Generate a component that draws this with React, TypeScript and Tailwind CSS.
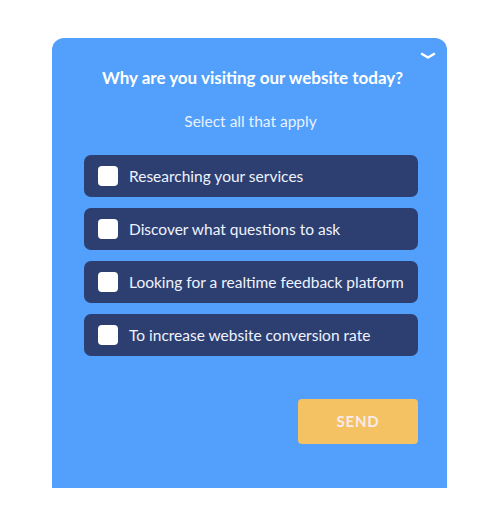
import { useState } from "react";

const options = [
  "Researching your services",
  "Discover what questions to ask",
  "Looking for a realtime feedback platform",
  "To increase website conversion rate",
];

export default function App() {
  const [checked, setChecked] = useState<boolean[]>([false, false, false, false]);

  return (
    <div className="w-[500px] h-[510px] bg-white pt-[38px] pl-[52px] font-['Lato','Noto_Sans',sans-serif]">
      <div className="relative w-[395px] h-[450px] rounded-t-[12px] bg-[#52a0fb] flex flex-col">
        {/* collapse chevron */}
        <button className="absolute right-[11px] top-[14px] text-white">
          <svg width="16" height="8" viewBox="0 0 16 8" fill="none">
            <path d="M2 2 L8 5.5 L14 2" stroke="white" strokeWidth="2.6" strokeLinecap="round" strokeLinejoin="round" />
          </svg>
        </button>

        <h1 className="mt-[28px] pl-[6px] text-center text-[17px] font-bold text-white leading-[24px]">
          Why are you visiting our website today?
        </h1>

        <p className="mt-[20px] pl-[2px] text-center text-[15.5px] text-[#e8f1ff] leading-[22px]">
          Select all that apply
        </p>

        <div className="mt-[23px] ml-[32px] w-[334px] flex flex-col gap-[11px]">
          {options.map((opt, i) => (
            <label
              key={opt}
              className="h-[42px] rounded-[7px] bg-[#2d3f70] flex items-center pl-[14px] gap-[11px] cursor-pointer"
            >
              <input
                type="checkbox"
                checked={checked[i]}
                onChange={() =>
                  setChecked(checked.map((c, j) => (j === i ? !c : c)))
                }
                className="sr-only"
              />
              <span className="w-[20px] h-[20px] rounded-[4px] bg-white" />
              <span className="text-[15.5px] text-[#eef3ff] pt-[1px]">{opt}</span>
            </label>
          ))}
        </div>

        <div className="mt-[43px] ml-[246px]">
          <button className="w-[120px] h-[45px] rounded-[4px] bg-[#f4c163] text-[15px] font-bold tracking-[0.8px] text-[#f7ebeb]">
            SEND
          </button>
        </div>
      </div>
    </div>
  );
}
